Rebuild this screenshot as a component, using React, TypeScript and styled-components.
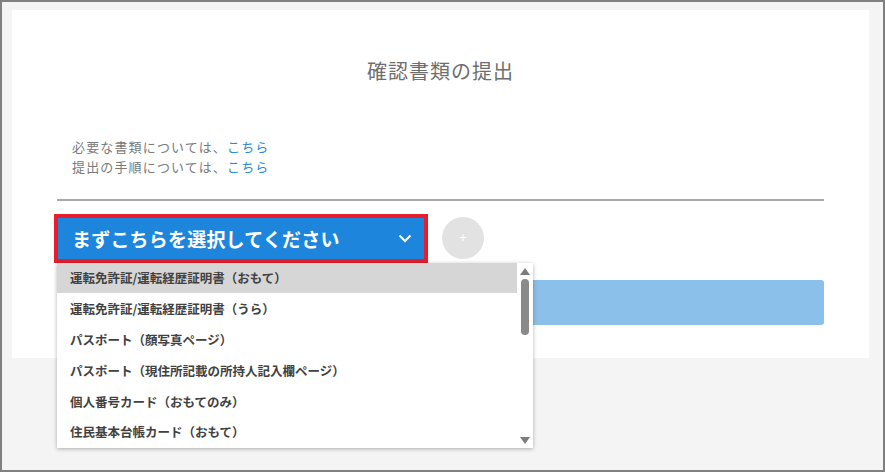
import styled, { createGlobalStyle } from "styled-components"

const GlobalStyle = createGlobalStyle`
    html, body {
        margin: 0;
        padding: 0;
        background: #f4f4f4;
    }

    body {
        font-family: "Noto Sans CJK JP", "Noto Sans", sans-serif;
    }
`

const Frame = styled.div`
    box-sizing: border-box;
    height: 472px;
    border: 2px solid #808080;
    padding: 8px 14px 0 10px;
    background: #f4f4f4;
`

const Card = styled.div`
    background: #ffffff;
    padding: 0 45px 33px;
`

const Title = styled.h1`
    margin: 0;
    padding-top: 46px;
    text-align: center;
    font-size: 20px;
    line-height: 30px;
    font-weight: 400;
    letter-spacing: 1px;
    color: #6e6e6e;
`

const Notes = styled.div`
    margin-top: 51px;
    padding-left: 15px;
    font-size: 13px;
    line-height: 20px;
    letter-spacing: 1.15px;
    color: #7a7a7a;
`

const NoteLink = styled.a`
    color: #2a8ad8;
    text-decoration: none;
`

const Divider = styled.hr`
    margin: 22px 0 0;
    border: none;
    height: 2px;
    background: #a9a9a9;
`

const SelectRow = styled.div`
    margin-top: 16px;
    padding-left: 1px;
    display: flex;
    align-items: center;
    gap: 18px;
`

const SelectWrap = styled.div`
    position: relative;
`

const SelectBox = styled.div`
    box-sizing: border-box;
    width: 366px;
    height: 41px;
    background: #1d86dc;
    outline: 4px solid #e61e2b;
    display: flex;
    align-items: center;
    justify-content: space-between;
    padding: 0 12px 0 14px;
    color: #ffffff;
    font-size: 19px;
    font-weight: 700;
    letter-spacing: 0.2px;
`

const AddButton = styled.div`
    width: 42px;
    height: 42px;
    border-radius: 50%;
    background: #e2e2e2;
    color: #ffffff;
    display: flex;
    align-items: center;
    justify-content: center;
    font-size: 12px;
    font-family: "Liberation Sans", sans-serif;
`

const SubmitBar = styled.div`
    margin-top: 21px;
    height: 45px;
    border-radius: 3px;
    background: #8bc0ea;
`

const Menu = styled.div`
    position: absolute;
    left: -1px;
    top: calc(100% + 4px);
    width: 476px;
    height: 185px;
    background: #ffffff;
    box-shadow: 0 1px 4px rgba(0, 0, 0, 0.3);
    display: flex;
    z-index: 10;
`

const MenuList = styled.ul`
    flex: 1;
    margin: 0;
    padding: 0;
    list-style: none;
    overflow: hidden;
`

const MenuItem = styled.li<{ active?: boolean }>`
    height: 30.8px;
    display: flex;
    align-items: center;
    padding-left: 13px;
    font-size: 12.5px;
    font-weight: 700;
    color: #414141;
    background: ${props => props.active ? '#d6d6d6' : '#ffffff'};
`

const ScrollTrack = styled.div`
    width: 16px;
    display: flex;
    flex-direction: column;
    align-items: center;
    padding: 5px 0 4px;
    box-sizing: border-box;
`

const Thumb = styled.div`
    margin-top: 4px;
    width: 8px;
    height: 56px;
    border-radius: 4px;
    background: #8a8a8a;
`

const Spacer = styled.div`
    flex: 1;
`

const items = [
    "運転免許証/運転経歴証明書（おもて）",
    "運転免許証/運転経歴証明書（うら）",
    "パスポート（顔写真ページ）",
    "パスポート（現住所記載の所持人記入欄ページ）",
    "個人番号カード（おもてのみ）",
    "住民基本台帳カード（おもて）",
]

const App = () => {
    return (
        <>
            <GlobalStyle />
            <Frame>
                <Card>
                    <Title>確認書類の提出</Title>

                    <Notes>
                        <div>必要な書類については、<NoteLink>こちら</NoteLink></div>
                        <div>提出の手順については、<NoteLink>こちら</NoteLink></div>
                    </Notes>

                    <Divider />

                    <SelectRow>
                        <SelectWrap>
                            <SelectBox>
                                <span>まずこちらを選択してください</span>
                                <svg width="14" height="9" viewBox="0 0 14 9">
                                    <path d="M1.5 1.5 L7 7 L12.5 1.5" fill="none" stroke="#ffffff" strokeWidth="2" />
                                </svg>
                            </SelectBox>

                            <Menu>
                                <MenuList>
                                    {items.map((item, i) => (
                                        <MenuItem key={item} active={i === 0}>{item}</MenuItem>
                                    ))}
                                </MenuList>

                                <ScrollTrack>
                                    <svg width="10" height="7" viewBox="0 0 10 7">
                                        <path d="M0 7 L5 0 L10 7 Z" fill="#7c7c7c" />
                                    </svg>
                                    <Thumb />
                                    <Spacer />
                                    <svg width="10" height="7" viewBox="0 0 10 7">
                                        <path d="M0 0 L10 0 L5 7 Z" fill="#7c7c7c" />
                                    </svg>
                                </ScrollTrack>
                            </Menu>
                        </SelectWrap>

                        <AddButton>+</AddButton>
                    </SelectRow>

                    <SubmitBar />
                </Card>
            </Frame>
        </>
    )
}

export default App
